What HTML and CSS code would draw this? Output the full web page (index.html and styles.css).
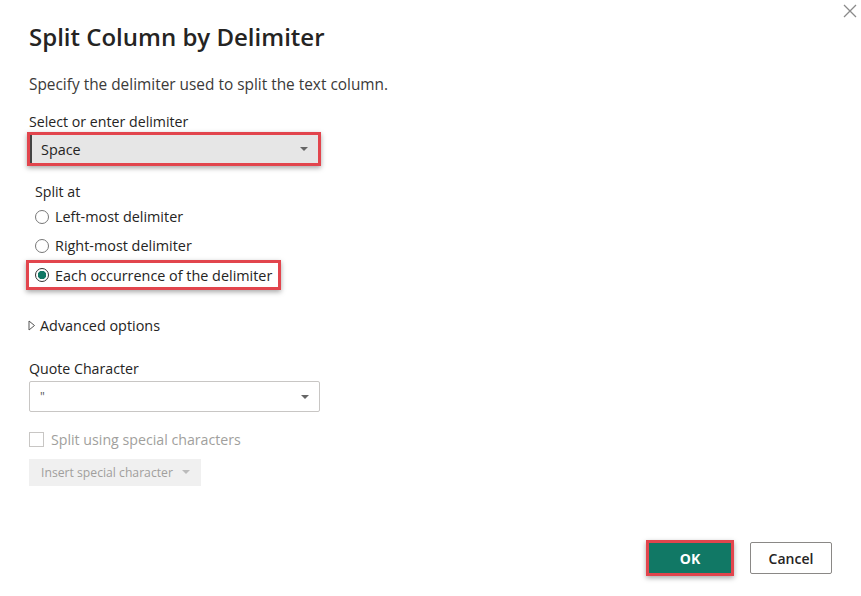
FILE: index.html
```html
<!DOCTYPE html>
<html lang="en">
<head>
    <meta charset="UTF-8">
    <title>Split Column by Delimiter</title>
    <link rel="stylesheet" href="styles.css">
</head>
<body>
    <div class="dialog">
        <button class="close-button" aria-label="Close">
            <svg width="14" height="14" viewBox="0 0 14 14"><path d="M1 1L13 13M13 1L1 13" stroke="#8a8a8a" stroke-width="1.3"/></svg>
        </button>
        <h1>Split Column by Delimiter</h1>
        <p class="intro">Specify the delimiter used to split the text column.</p>

        <label class="field-label">Select or enter delimiter</label>
        <div class="highlight select-wrap">
            <div class="select select-active">
                <span>Space</span>
                <span class="caret"></span>
            </div>
        </div>

        <div class="split-at">
            <div class="group-label">Split at</div>
            <label class="radio-row"><span class="radio"></span>Left-most delimiter</label>
            <label class="radio-row"><span class="radio"></span>Right-most delimiter</label>
            <label class="radio-row highlight checked-row"><span class="radio checked"></span>Each occurrence of the delimiter</label>
        </div>

        <div class="advanced">
            <svg width="8" height="11" viewBox="0 0 8 11"><path d="M1 1L6.5 5.5L1 10Z" fill="none" stroke="#555" stroke-width="1"/></svg>
            <span>Advanced options</span>
        </div>

        <label class="field-label">Quote Character</label>
        <div class="select select-plain">
            <span class="quote">"</span>
            <span class="caret"></span>
        </div>

        <label class="check-row"><span class="checkbox"></span>Split using special characters</label>
        <div class="insert-button">Insert special character <span class="caret caret-light"></span></div>

        <div class="footer">
            <div class="highlight ok-wrap"><button class="ok">OK</button></div>
            <button class="cancel">Cancel</button>
        </div>
    </div>
</body>
</html>
```

FILE: styles.css
```css
body {
    margin: 0;
    background: #fff;
    font-family: "Open Sans", "Noto Sans", sans-serif;
    color: #333;
}
.dialog {
    position: relative;
    height: 596px;
    box-sizing: border-box;
    padding: 20px 29px 0;
    display: flex;
    flex-direction: column;
    align-items: flex-start;
}
.close-button {
    position: absolute;
    top: 0;
    right: 0;
    width: 22px;
    height: 22px;
    border: none;
    background: none;
    padding: 4px;
}
h1 {
    margin: 0;
    font-size: 24px;
    font-weight: 600;
    color: #252423;
}
.intro {
    margin: 21px 0 0;
    font-size: 15.4px;
    color: #3b3a39;
}
.field-label {
    display: block;
    margin-top: 17px;
    font-size: 14.2px;
    color: #252423;
}
.highlight {
    border: 3px solid #e2454d;
    box-shadow: 0 2px 5px rgba(0,0,0,0.35);
}
.select-wrap {
    margin-top: 1px;
    margin-left: -2px;
    width: 288px;
}
.select {
    display: flex;
    align-items: center;
    justify-content: space-between;
    box-sizing: border-box;
    font-size: 14.4px;
}
.select-active {
    height: 28px;
    background: #e6e6e6;
    border-left: 2px solid #444;
    padding: 0 10px 0 9px;
    color: #252423;
}
.caret {
    width: 0;
    height: 0;
    border-left: 4px solid transparent;
    border-right: 4px solid transparent;
    border-top: 4px solid #666;
}
.caret-light {
    border-top-color: #bbb;
    display: inline-block;
    margin-left: 6px;
    vertical-align: 3px;
}
.split-at {
    margin-top: 16px;
    display: flex;
    flex-direction: column;
    align-items: flex-start;
}
.group-label {
    margin-left: 6px;
    font-size: 14.2px;
    color: #252423;
    margin-bottom: 1px;
}
.radio-row {
    display: flex;
    align-items: center;
    gap: 6px;
    height: 29px;
    padding-left: 6px;
    font-size: 14.4px;
    color: #252423;
}
.radio {
    width: 14px;
    height: 14px;
    border: 1px solid #777;
    border-radius: 50%;
    box-sizing: border-box;
}
.radio.checked {
    border-color: #333;
    background: radial-gradient(circle, #117865 0 4px, #fff 4.5px);
}
.checked-row {
    margin-left: -3px;
    height: 24px;
    padding: 0 6px 0 6px;
}
.advanced {
    margin-top: 26px;
    display: flex;
    align-items: center;
    gap: 4px;
    font-size: 14.4px;
    color: #252423;
    margin-left: -1px;
}
.advanced + .field-label {
    margin-top: 24px;
}
.select-plain {
    margin-top: 3px;
    width: 291px;
    height: 31px;
    border: 1px solid #c8c6c4;
    border-radius: 2px;
    padding: 0 10px 0 10px;
}
.quote {
    font-size: 12px;
    color: #555;
}
.check-row {
    margin-top: 18px;
    display: flex;
    align-items: center;
    gap: 7px;
    font-size: 14.2px;
    color: #a19f9d;
}
.checkbox {
    width: 15px;
    height: 15px;
    border: 1px solid #c8c6c4;
    box-sizing: border-box;
}
.insert-button {
    margin-top: 10px;
    background: #f0f0f0;
    color: #a19f9d;
    font-size: 12.2px;
    padding: 5px 11px 5px 12px;
    white-space: nowrap;
}
.footer {
    margin-top: auto;
    margin-bottom: 20px;
    align-self: flex-end;
    display: flex;
    align-items: center;
    gap: 16px;
}
.ok {
    display: block;
    width: 82px;
    height: 30px;
    background: #117865;
    color: #fff;
    border: none;
    font-family: inherit;
    font-size: 14px;
    font-weight: 700;
}
.cancel {
    width: 82px;
    height: 32px;
    background: #fff;
    border: 1px solid #8a8886;
    border-radius: 2px;
    font-family: inherit;
    font-size: 14px;
    font-weight: 600;
    color: #252423;
}
```
